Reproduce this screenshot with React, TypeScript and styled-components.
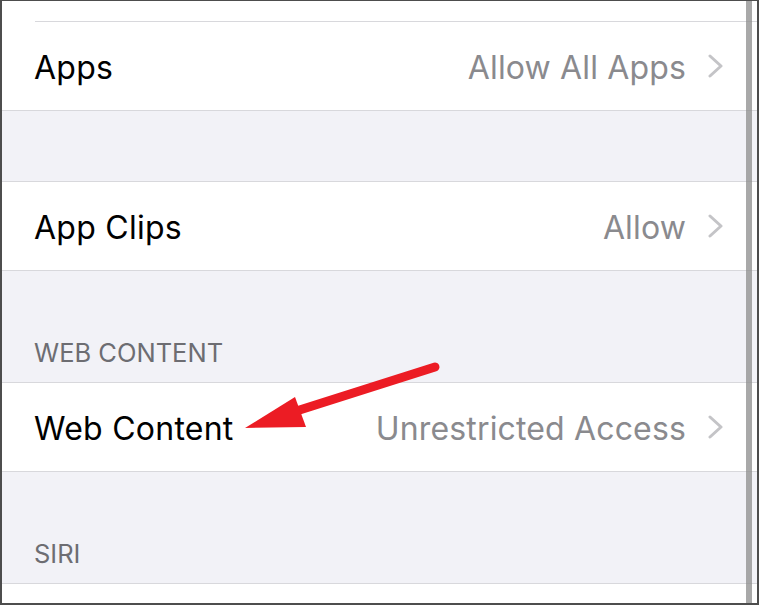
import React from "react";
import styled, { createGlobalStyle } from "styled-components";

const Global = createGlobalStyle`
  html, body { margin: 0; padding: 0; background: #ffffff; }
  body { font-family: Inter, "Noto Sans", sans-serif; }
`;

const Frame = styled.div`
  position: relative;
  width: 759px;
  height: 605px;
  box-sizing: border-box;
  border-style: solid;
  border-color: #4d4d4d;
  border-width: 1px 2px 2px 2px;
  background: #f2f2f7;
  overflow: hidden;
  display: flex;
  flex-direction: column;
  & > * { flex-shrink: 0; }
`;

const Group = styled.div<{ $open?: boolean }>`
  background: #ffffff;
  border-top: ${(p) => (p.$open ? "none" : "1px solid #d8d8dc")};
  border-bottom: 1px solid #d8d8dc;
  display: flex;
  flex-direction: column;
`;

const Cell = styled.div<{ $h: number; $sep?: boolean }>`
  height: ${(p) => p.$h}px;
  flex-shrink: 0;
  display: flex;
  align-items: center;
  padding: 0 34px 0 32px;
  position: relative;
  ${(p) =>
    p.$sep
      ? `&::after { content: ""; position: absolute; left: 33px; right: 0; bottom: 0; height: 1px; background: #d8d8dc; }`
      : ""}
`;

const Label = styled.span`
  flex: 1;
  font-size: 32px;
  color: #000000;
  letter-spacing: 0.25px;
  padding-top: 3px;
`;

const Value = styled.span`
  font-size: 32px;
  color: #8a8a8e;
  letter-spacing: 0.15px;
  margin-right: 22px;
  padding-top: 3px;
`;

const Chevron = () => (
  <svg width="15" height="24" viewBox="0 0 15 24">
    <path d="M2 2 L13 12 L2 22" fill="none" stroke="#c4c4c7" strokeWidth="3" strokeLinecap="round" strokeLinejoin="round" />
  </svg>
);

const Spacer = styled.div<{ $h: number }>`
  height: ${(p) => p.$h}px;
  display: flex;
  align-items: flex-end;
  padding: 0 0 14px 32px;
  box-sizing: border-box;
`;

const Header = styled.span`
  font-size: 25.5px;
  color: #6d6d72;
  letter-spacing: 0;
`;

const ScrollBar = styled.div`
  position: absolute;
  top: 0;
  bottom: 0;
  left: 744px;
  width: 6px;
  background: rgba(140, 140, 140, 0.75);
`;

const Arrow = styled.svg`
  position: absolute;
  left: 0;
  top: 0;
  pointer-events: none;
`;

export default function App() {
  return (
    <>
      <Global />
      <Frame>
        <Group $open>
          <Cell $h={21} $sep />
          <Cell $h={88}>
            <Label>Apps</Label>
            <Value>Allow All Apps</Value>
            <Chevron />
          </Cell>
        </Group>
        <Spacer $h={70} />
        <Group>
          <Cell $h={88}>
            <Label>App Clips</Label>
            <Value>Allow</Value>
            <Chevron />
          </Cell>
        </Group>
        <Spacer $h={111}>
          <Header>WEB CONTENT</Header>
        </Spacer>
        <Group>
          <Cell $h={88}>
            <Label>Web Content</Label>
            <Value>Unrestricted Access</Value>
            <Chevron />
          </Cell>
        </Group>
        <Spacer $h={111}>
          <Header>SIRI</Header>
        </Spacer>
        <Group>
          <Cell $h={40} />
        </Group>
        <ScrollBar />
        <Arrow width="755" height="602" viewBox="0 0 755 602">
          <line x1="433" y1="366" x2="285" y2="413" stroke="#ec1c24" strokeWidth="9" strokeLinecap="round" />
          <polygon points="243,427 293,396 304,426" fill="#ec1c24" />
        </Arrow>
      </Frame>
    </>
  );
}
